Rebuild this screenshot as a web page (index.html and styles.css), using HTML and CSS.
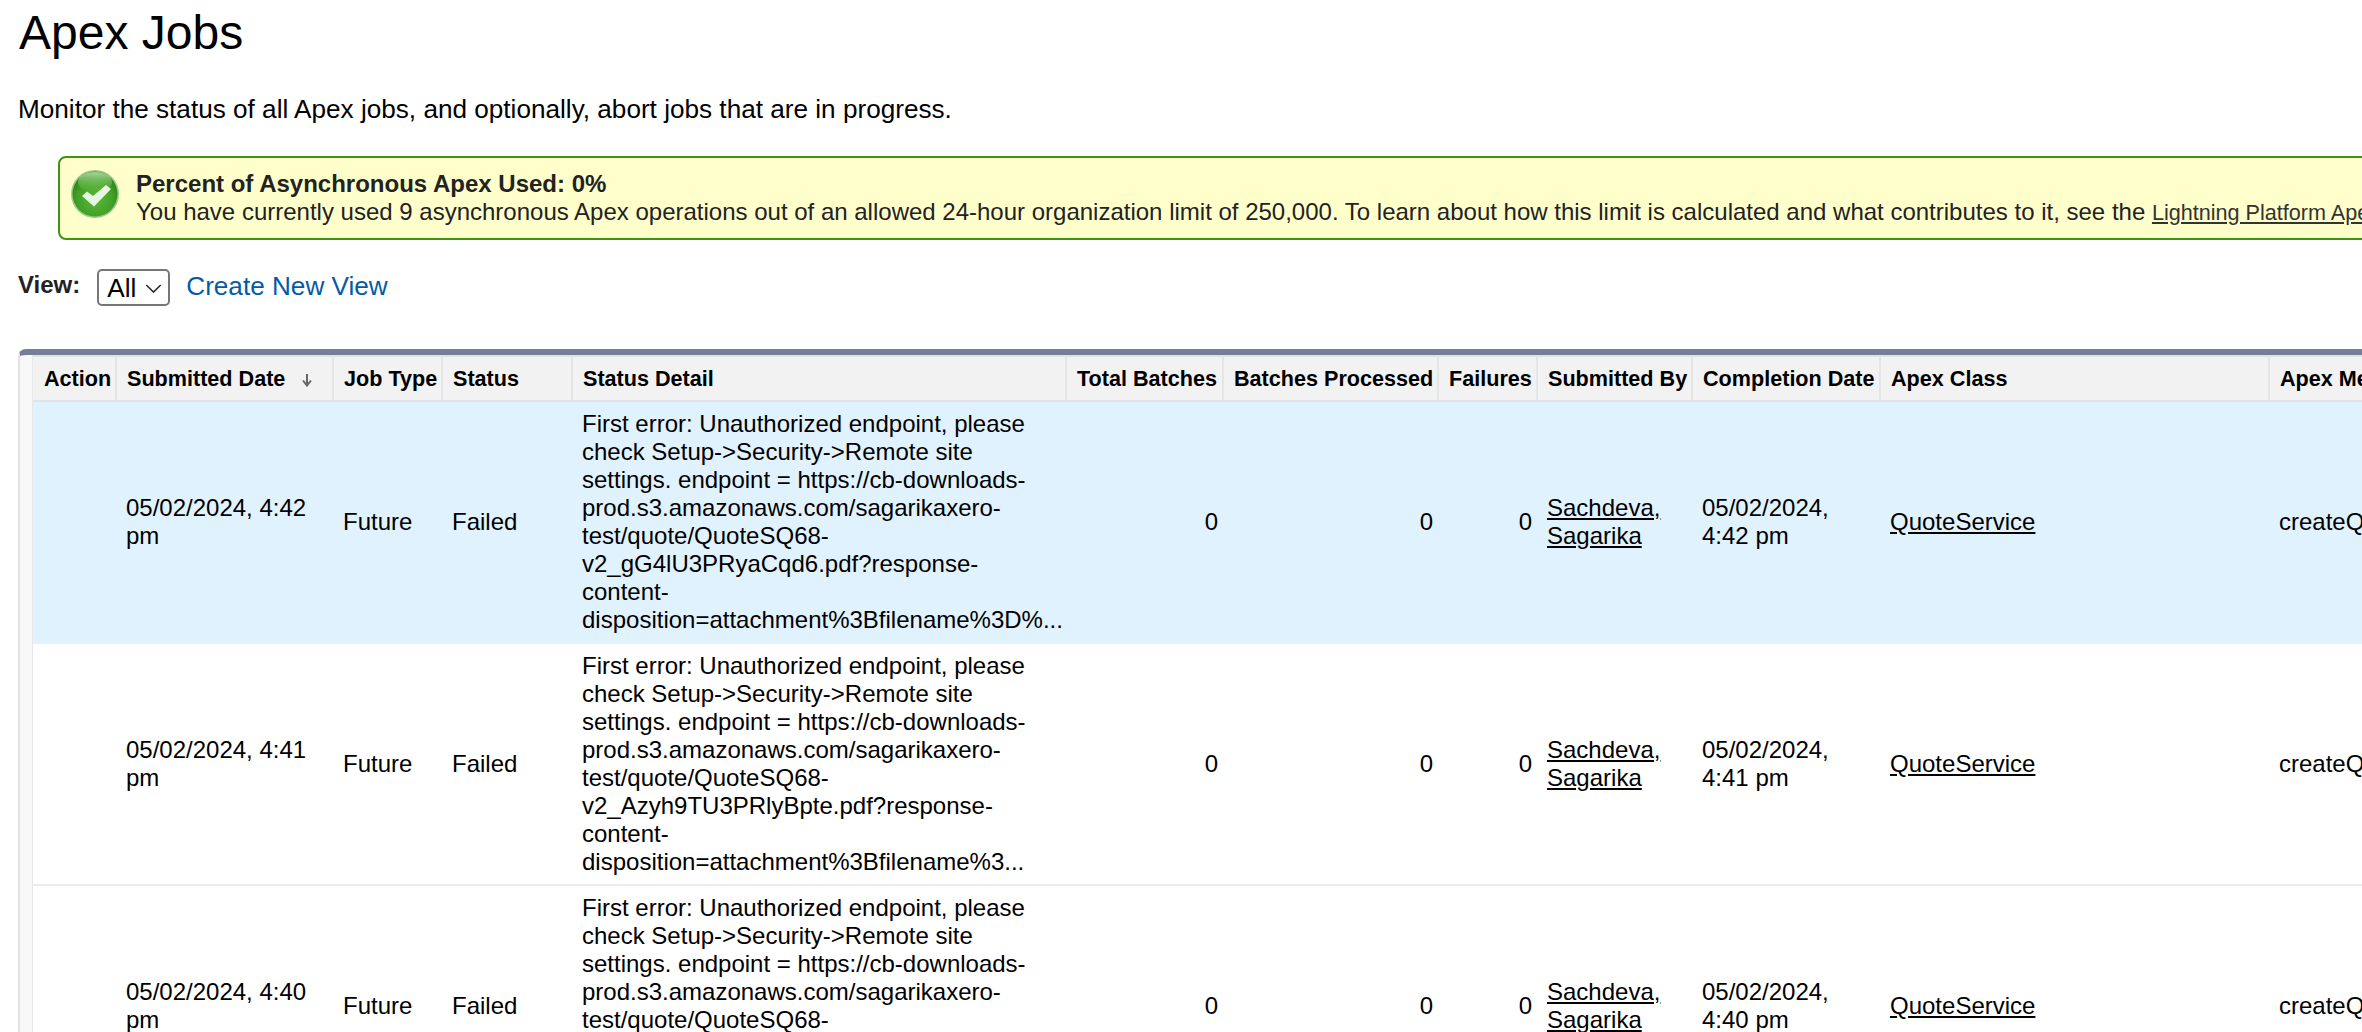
FILE: index.html
```html
<!DOCTYPE html>
<html lang="en">
<head>
<meta charset="utf-8">
<title>Apex Jobs</title>
<link rel="stylesheet" href="styles.css">
</head>
<body>
<main class="page">
  <h1 class="title">Apex Jobs</h1>
  <p class="intro">Monitor the status of all Apex jobs, and optionally, abort jobs that are in progress.</p>

  <section class="notice">
    <svg class="notice-icon" viewBox="0 0 48 48" aria-hidden="true">
      <defs>
        <radialGradient id="okFill" cx="50%" cy="62%" r="55%">
          <stop offset="0" stop-color="#5cb83a"/>
          <stop offset="0.7" stop-color="#42a126"/>
          <stop offset="1" stop-color="#2f8a18"/>
        </radialGradient>
        <linearGradient id="okShine" x1="0" y1="0" x2="0" y2="1">
          <stop offset="0" stop-color="#b9e0aa" stop-opacity="0.9"/>
          <stop offset="1" stop-color="#6cc04c" stop-opacity="0.1"/>
        </linearGradient>
      </defs>
      <circle cx="24" cy="24" r="24" fill="#9ac98a"/>
      <circle cx="24" cy="24" r="22.5" fill="url(#okFill)"/>
      <ellipse cx="24" cy="12" rx="17" ry="10" fill="url(#okShine)"/>
      <path d="M11 26l5-4.5 6 4.500 13-11 5 4-17 17.500z" fill="#e9f5e3"/>
    </svg>
    <div class="notice-text">
      <div class="notice-title">Percent of Asynchronous Apex Used: 0%</div>
      <div>You have currently used 9 asynchronous Apex operations out of an allowed 24-hour organization limit of 250,000. To learn about how this limit is calculated and what contributes to it, see the <a class="notice-link" href="#">Lightning Platform Apex Limits</a>.</div>
    </div>
  </section>

  <div class="view-row">
    <label class="view-label" for="view">View:</label>
    <span class="select-wrap">
      <select class="view-select" id="view"><option>All</option></select>
      <svg class="select-chevron" viewBox="0 0 18 10" aria-hidden="true"><path d="M1 1l8 8 8-8" fill="none" stroke="#222" stroke-width="1.6"/></svg>
    </span>
    <a class="view-link" href="#">Create New View</a>
  </div>

  <div class="panel">
    <table class="jobs">
      <colgroup>
        <col class="c-action"><col class="c-date"><col class="c-type"><col class="c-status"><col class="c-detail"><col class="c-total"><col class="c-processed"><col class="c-fail"><col class="c-by"><col class="c-done"><col class="c-class"><col class="c-method">
      </colgroup>
      <thead>
        <tr>
          <th>Action</th>
          <th>Submitted Date<svg class="sort-arrow" viewBox="0 0 12 14" aria-hidden="true"><path d="M6 1v10M2 7.500l4 5 4-5" fill="none" stroke="#666" stroke-width="2"/></svg></th>
          <th>Job Type</th>
          <th>Status</th>
          <th>Status Detail</th>
          <th>Total Batches</th>
          <th>Batches Processed</th>
          <th>Failures</th>
          <th>Submitted By</th>
          <th>Completion Date</th>
          <th>Apex Class</th>
          <th>Apex Method</th>
        </tr>
      </thead>
      <tbody>
        <tr class="is-active">
          <td></td>
          <td>05/02/2024, 4:42 pm</td>
          <td>Future</td>
          <td>Failed</td>
          <td class="detail">First error: Unauthorized endpoint, please check Setup-&gt;Security-&gt;Remote site settings. endpoint = https://cb-downloads-prod.s3.amazonaws.com/sagarikaxero-test/quote/QuoteSQ68-v2_gG4lU3PRyaCqd6.pdf?response-content-disposition=attachment%3Bfilename%3D%...</td>
          <td class="num">0</td>
          <td class="num">0</td>
          <td class="num">0</td>
          <td><a href="#">Sachdeva, Sagarika</a></td>
          <td>05/02/2024, 4:42 pm</td>
          <td><a href="#">QuoteService</a></td>
          <td>createQuote</td>
        </tr>
        <tr>
          <td></td>
          <td>05/02/2024, 4:41 pm</td>
          <td>Future</td>
          <td>Failed</td>
          <td class="detail">First error: Unauthorized endpoint, please check Setup-&gt;Security-&gt;Remote site settings. endpoint = https://cb-downloads-prod.s3.amazonaws.com/sagarikaxero-test/quote/QuoteSQ68-v2_Azyh9TU3PRlyBpte.pdf?response-content-disposition=attachment%3Bfilename%3...</td>
          <td class="num">0</td>
          <td class="num">0</td>
          <td class="num">0</td>
          <td><a href="#">Sachdeva, Sagarika</a></td>
          <td>05/02/2024, 4:41 pm</td>
          <td><a href="#">QuoteService</a></td>
          <td>createQuote</td>
        </tr>
        <tr>
          <td></td>
          <td>05/02/2024, 4:40 pm</td>
          <td>Future</td>
          <td>Failed</td>
          <td class="detail">First error: Unauthorized endpoint, please check Setup-&gt;Security-&gt;Remote site settings. endpoint = https://cb-downloads-prod.s3.amazonaws.com/sagarikaxero-test/quote/QuoteSQ68-v2_Azyh9TU3PRlyBpte.pdf?response-content-disposition=attachment%3Bfilename%3...</td>
          <td class="num">0</td>
          <td class="num">0</td>
          <td class="num">0</td>
          <td><a href="#">Sachdeva, Sagarika</a></td>
          <td>05/02/2024, 4:40 pm</td>
          <td><a href="#">QuoteService</a></td>
          <td>createQuote</td>
        </tr>
      </tbody>
    </table>
  </div>
</main>
</body>
</html>
```
FILE: styles.css
```css
html, body {
  margin: 0;
  height: 100%;
  overflow: hidden;
  background: #fff;
}

body {
  font-family: "Liberation Sans", Arial, sans-serif;
  font-size: 24px;
  line-height: 28px;
  color: #000;
}

.page {
  width: 2700px;
  padding: 5px 0 0 18px;
  box-sizing: border-box;
}

.title {
  margin: 0 0 34px 1px;
  font-size: 48px;
  line-height: 56px;
  font-weight: 400;
}

.intro {
  margin: 0 0 33px;
  font-size: 26.15px;
}

.notice {
  display: flex;
  gap: 17px;
  margin-left: 40px;
  padding: 12px 11px 11px 11px;
  border: 2px solid #3f9312;
  border-radius: 8px;
  background: #ffc;
  color: #222;
}

.notice-icon {
  flex: none;
  width: 48px;
  height: 48px;
  margin-top: 0;
}

.notice-text {
  white-space: nowrap;
}

.notice-title {
  font-weight: 700;
}

.notice-link {
  font-size: 21.6px;
  color: #333;
}

.view-row {
  display: flex;
  align-items: flex-start;
  margin-top: 29px;
}

.view-label {
  margin-top: 2px;
  font-weight: 700;
  color: #222;
}

.select-wrap {
  position: relative;
  display: inline-block;
  margin-left: 17px;
}

.view-select {
  display: block;
  width: 73px;
  height: 37px;
  padding: 0 0 0 8px;
  border: 2px solid #767676;
  border-radius: 5px;
  background: #fff;
  color: #000;
  font-family: inherit;
  font-size: 26.15px;
  appearance: none;
}

.select-chevron {
  position: absolute;
  top: 15px;
  left: 48px;
  width: 17px;
  height: 9px;
  pointer-events: none;
}

.view-link {
  margin: 3px 0 0 16px;
  font-size: 26.15px;
  color: #015ba7;
  text-decoration: none;
}

.panel {
  width: 2600px;
  margin: 43px 0 0;
  padding: 0 0 0 13px;
  border-top: 6px solid #747e96;
  border-left: 2px solid #e2e2e2;
  border-top-left-radius: 8px;
  background: #f8f8f8;
}

.jobs {
  table-layout: fixed;
  width: 2535px;
  border-collapse: separate;
  border-spacing: 0;
  background: #fff;
  box-shadow: -1px 0 0 #e8e8e8;
}

.c-action { width: 82px; }
.c-date { width: 217px; }
.c-type { width: 109px; }
.c-status { width: 130px; }
.c-detail { width: 494px; }
.c-total { width: 157px; }
.c-processed { width: 215px; }
.c-fail { width: 99px; }
.c-by { width: 155px; }
.c-done { width: 188px; }
.c-class { width: 389px; }
.c-method { width: 300px; }

.jobs th {
  height: 43px;
  padding: 0 2px 0 10px;
  border-top: 2px solid #e0e3e5;
  border-left: 2px solid #e3e5e6;
  border-bottom: 2px solid #e0e3e5;
  background: #f2f2f2;
  font-size: 21.6px;
  line-height: 26px;
  font-weight: 700;
  text-align: left;
  white-space: nowrap;
}

.jobs th:first-child {
  border-left: 0;
  padding-left: 11px;
}

.sort-arrow {
  width: 12px;
  height: 14px;
  margin-left: 16px;
  vertical-align: -1px;
}

.jobs td {
  padding: 8px 3px 8px 11px;
  border-bottom: 2px solid #ededed;
  vertical-align: middle;
}

.jobs .num {
  padding-right: 4px;
  text-align: right;
}

.jobs a {
  color: #000;
}

.is-active td {
  background: #e1f2ff;
  border-bottom-color: #e1f2ff;
}
```
